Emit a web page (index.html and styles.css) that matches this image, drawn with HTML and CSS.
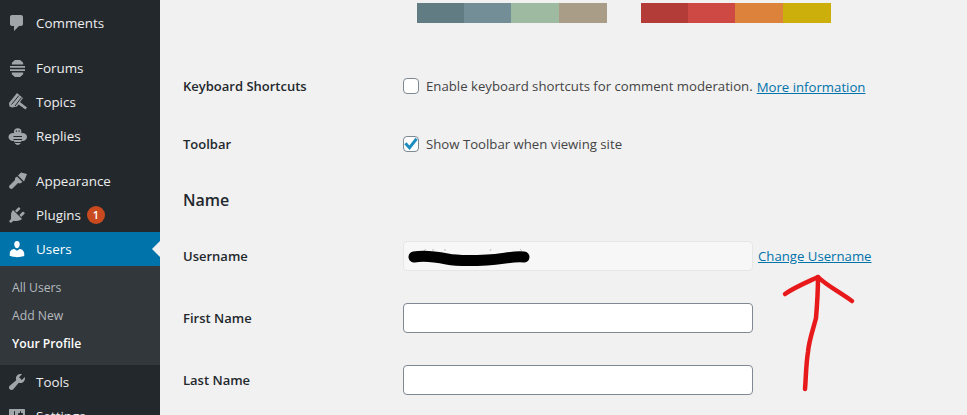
FILE: index.html
```html
<!DOCTYPE html>
<html lang="en-US">
<head>
  <meta charset="UTF-8" />
  <meta name="viewport" content="width=device-width, initial-scale=1" />
  <title>Profile</title>
  <link rel="stylesheet" href="styles.css">
</head>
<body>
  <div class="admin">
    <nav class="sidebar" aria-label="Main menu">
      <a class="menu-item" href="#">
        <svg class="menu-icon" viewBox="0 0 20 20"><path d="M5 2h9c1.100 0 2 .9 2 2v7c0 1.100-.9 2-2 2h-2l-5 5v-5H5c-1.100 0-2-.9-2-2V4c0-1.100.9-2 2-2z"/></svg>
        <span>Comments</span>
      </a>
      <div class="menu-sep"></div>
      <a class="menu-item" href="#">
        <svg class="menu-icon" viewBox="0 0 20 20"><path d="M8 2h5l3 2.500.3 2H4.700L5 4.500zM3 8h15v1.800H3zM3 11.300h15v1.800H3zM4.700 14.600h11.600l-.3 2L13 19H8l-3-2.400z"/></svg>
        <span>Forums</span>
      </a>
      <a class="menu-item" href="#">
        <svg class="menu-icon" viewBox="0 0 20 20">
          <path d="M2 11L10 1l6 5-3 4 7 5.500-1.500 2L11.500 12.500 10 14.500 5 15.500 2.500 14.500z"/>
          <path class="cut-line" d="M4.500 12.500L12 3.500M8 14L14.500 5.500"/>
        </svg>
        <span>Topics</span>
      </a>
      <a class="menu-item" href="#">
        <svg class="menu-icon" viewBox="0 0 20 20">
          <ellipse cx="6" cy="11" rx="4.500" ry="4"/>
          <ellipse cx="15.500" cy="11" rx="4.500" ry="4"/>
          <circle cx="10.700" cy="6" r="3.800"/>
          <ellipse cx="10.700" cy="13" rx="4" ry="6"/>
          <path class="cut" d="M6.500 10h8.500v.9H6.500zM6.500 13h8.500v.9H6.500zM7.500 16h6.500v.9H7.500zM8.800 4.500h1.200v1.200H8.800zM11.500 4.500h1.200v1.200h-1.200z"/>
        </svg>
        <span>Replies</span>
      </a>
      <div class="menu-sep"></div>
      <a class="menu-item" href="#">
        <svg class="menu-icon" viewBox="0 0 20 20"><path d="M11 4.500L14 1.500 20 3 17 10.500zM2 15L8 9V7L10 5.500 15.500 11 13 12.500 11 12 5 18C3 18 2 17 2 15z"/></svg>
        <span>Appearance</span>
      </a>
      <a class="menu-item" href="#">
        <svg class="menu-icon" viewBox="0 0 20 20"><path d="M13.110 4.360L9.870 7.600 8 5.730l3.240-3.240c.35-.34 1.050-.2 1.560.32.520.51.660 1.210.310 1.550zm-8 1.770l.91-1.120 9.010 9.010-1.190.84c-.71.710-2.630 1.160-3.820 1.160H6.140L4.900 17.260c-.59.590-1.540.590-2.120 0-.59-.58-.59-1.530 0-2.120l1.240-1.240v-3.880c0-1.130.4-3.190 1.090-3.890zm7.260 3.970l3.240-3.240c.34-.35 1.040-.21 1.550.31.520.51.660 1.210.310 1.550l-3.240 3.250z"/></svg>
        <span>Plugins</span>
        <span class="badge">1</span>
      </a>
      <a class="menu-item current" href="#">
        <svg class="menu-icon" viewBox="0 0 20 20"><path d="M10 9.250c-2.270 0-2.730-3.440-2.730-3.440C7 4.020 7.820 2 9.970 2c2.160 0 2.980 2.020 2.710 3.810 0 0-.41 3.440-2.680 3.440zm0 2.570L12.720 10c2.390 0 4.520 2.330 4.520 4.530v2.490s-3.650 1.130-7.240 1.130c-3.650 0-7.240-1.130-7.240-1.130v-2.490c0-2.250 1.940-4.480 4.470-4.480z"/></svg>
        <span>Users</span>
      </a>
      <ul class="submenu">
        <li><a href="#">All Users</a></li>
        <li><a href="#">Add New</a></li>
        <li><a class="active" href="#">Your Profile</a></li>
      </ul>
      <a class="menu-item" href="#">
        <svg class="menu-icon" viewBox="0 0 20 20"><path d="M16.680 9.770c-1.340 1.340-3.300 1.670-4.950.99l-5.410 6.520c-.99.990-2.590.990-3.580 0s-.99-2.590 0-3.570l6.520-5.420c-.68-1.650-.35-3.610.99-4.950 1.280-1.280 3.120-1.620 4.720-1.060l-2.890 2.890 2.820 2.820 2.860-2.870c.53 1.580.18 3.390-1.080 4.650z"/></svg>
        <span>Tools</span>
      </a>
      <a class="menu-item" href="#">
        <svg class="menu-icon" viewBox="0 0 20 20"><path fill-rule="evenodd" d="M18 16V4c0-.55-.45-1-1-1H3c-.55 0-1 .45-1 1v12c0 .55.45 1 1 1h14c.55 0 1-.45 1-1zM8 11h1c.55 0 1 .45 1 1s-.45 1-1 1H8v1.500c0 .28-.22.5-.5.5s-.5-.22-.5-.5V13H6c-.55 0-1-.45-1-1s.45-1 1-1h1V5.500c0-.28.22-.5.5-.5s.5.22.5.5V11zm5-2h-1c-.55 0-1-.45-1-1s.45-1 1-1h1V5.500c0-.28.22-.5.5-.5s.5.22.5.5V7h1c.55 0 1 .45 1 1s-.45 1-1 1h-1v5.500c0 .28-.22.5-.5.5s-.5-.22-.5-.5V9z"/></svg>
        <span>Settings</span>
      </a>
    </nav>

    <main class="content">
      <div class="schemes">
        <div class="scheme">
          <i class="swatch s-47 ocean-1"></i><i class="swatch s-47 ocean-2"></i><i class="swatch s-48 ocean-3"></i><i class="swatch s-48 ocean-4"></i>
        </div>
        <div class="scheme">
          <i class="swatch s-47 sun-1"></i><i class="swatch s-47 sun-2"></i><i class="swatch s-48 sun-3"></i><i class="swatch s-48 sun-4"></i>
        </div>
      </div>

      <div class="row row-check">
        <div class="row-label">Keyboard Shortcuts</div>
        <div class="row-field">
          <input type="checkbox" id="shortcuts" />
          <label for="shortcuts">Enable keyboard shortcuts for comment moderation.</label>
          <a class="link more" href="#">More information</a>
        </div>
      </div>

      <div class="row row-check">
        <div class="row-label">Toolbar</div>
        <div class="row-field">
          <input type="checkbox" id="toolbar" checked />
          <label for="toolbar">Show Toolbar when viewing site</label>
        </div>
      </div>

      <h2 class="section-title">Name</h2>

      <div class="row row-input">
        <label class="row-label" for="user_login">Username</label>
        <div class="row-field">
          <div class="masked">
            <input type="text" id="user_login" disabled />
            <!-- username scribbled out in the screenshot -->
            <svg class="scribble" viewBox="0 0 130 24" aria-hidden="true">
              <path class="scribble-ghost" d="M21 7l2-2M30 7V5M42 7V5M87 7l1-2M119 7l-2-2"/>
              <path class="scribble-ink" d="M11 13C22 11 34 13 44 15S66 17 84 16S108 12 121 13"/>
            </svg>
          </div>
          <a class="link change" href="#">Change Username</a>
        </div>
      </div>

      <div class="row row-input">
        <label class="row-label" for="first_name">First Name</label>
        <div class="row-field"><input type="text" id="first_name" /></div>
      </div>

      <div class="row row-input">
        <label class="row-label" for="last_name">Last Name</label>
        <div class="row-field"><input type="text" id="last_name" /></div>
      </div>

      <!-- red hand drawn arrow pointing at the link -->
      <svg class="arrow" viewBox="0 0 80 124" aria-hidden="true">
        <path d="M4 22C12 16 24 11 37 5C45 13 57 19 71 29"/>
        <path d="M37 5C37 20 36 34 35 46C32 58 28 68 27 80C25 92 25 105 24 117"/>
      </svg>
    </main>
  </div>
</body>
</html>
```

FILE: styles.css
```css
*, *::before, *::after { box-sizing: border-box; }
html, body { height: 100%; }
body {
  margin: 0;
  background: #f1f1f1;
  color: #444;
  font-family: "Open Sans", "Noto Sans", "Liberation Sans", sans-serif;
  font-size: 13.2px;
  overflow: hidden;
}
.admin {
  display: flex;
  height: 415px;
  overflow: hidden;
}

/* sidebar */
.sidebar {
  flex: 0 0 160px;
  height: 440px;
  padding-top: 6px;
  background: #23282d;
  font-size: 13.4px;
}
.menu-item {
  display: flex;
  align-items: center;
  gap: 9px;
  position: relative;
  height: 34px;
  padding-left: 7px;
  color: #eee;
  text-decoration: none;
}
.menu-icon {
  flex: 0 0 20px;
  width: 20px;
  height: 20px;
  fill: #a0a5aa;
}
.menu-icon .cut { fill: #23282d; }
.menu-icon .cut-line {
  fill: none;
  stroke: #23282d;
  stroke-width: 1;
}
.menu-sep { height: 11px; }
.menu-item.current {
  background: #0073aa;
  color: #fff;
}
.menu-item.current .menu-icon { fill: #fff; }
.menu-item.current::after {
  content: "";
  position: absolute;
  right: 0;
  top: 9px;
  border: 8px solid transparent;
  border-right-color: #f1f1f1;
  border-left-width: 0;
}
.badge {
  width: 18px;
  height: 18px;
  margin-left: -3px;
  border-radius: 50%;
  background: #ca4a1f;
  color: #fff;
  font-size: 11px;
  font-weight: 600;
  line-height: 18px;
  text-align: center;
}
.submenu {
  margin: 0;
  padding: 8px 0 7px;
  list-style: none;
  background: #32373c;
}
.submenu a {
  display: block;
  height: 28px;
  padding-left: 12px;
  color: #b4b9be;
  font-size: 12.2px;
  line-height: 28px;
  text-decoration: none;
}
.submenu a.active {
  color: #fff;
  font-weight: 600;
}

/* main form */
.content {
  flex: 1;
  position: relative;
  padding: 3px 0 0 23px;
}
.schemes {
  display: flex;
  gap: 34px;
  margin: 0 0 34px 234px;
}
.scheme { display: flex; }
.swatch {
  display: block;
  height: 20px;
}
.s-47 { width: 47px; }
.s-48 { width: 48px; }
.ocean-1 { background: #627c83; }
.ocean-2 { background: #738e96; }
.ocean-3 { background: #9ebaa0; }
.ocean-4 { background: #aa9d88; }
.sun-1 { background: #b43c38; }
.sun-2 { background: #cf4944; }
.sun-3 { background: #dd823b; }
.sun-4 { background: #ccaf0b; }

.row {
  display: flex;
  align-items: center;
}
.row-check { height: 58px; }
.row-input { height: 62px; }
.row-label {
  flex: 0 0 220px;
  color: #23282d;
  font-size: 13px;
  font-weight: 600;
}
.row-field {
  display: flex;
  align-items: center;
}
.section-title {
  height: 52px;
  margin: 0;
  color: #23282d;
  font-size: 16px;
  font-weight: 600;
  line-height: 54px;
}

input[type="checkbox"] {
  appearance: none;
  display: grid;
  place-items: center;
  width: 16px;
  height: 16px;
  margin: 0 7px 0 0;
  border: 1px solid #7e8993;
  border-radius: 4px;
  background: #fff;
}
input[type="checkbox"]:checked::before {
  content: "";
  width: 14px;
  height: 14px;
  background: #1e8cbe;
  clip-path: polygon(2% 52%, 18% 38%, 38% 60%, 82% 6%, 98% 20%, 40% 92%);
}
input[type="text"] {
  display: block;
  width: 350px;
  height: 30px;
  border: 1px solid #7e8993;
  border-radius: 4px;
  background: #fff;
}
input[type="text"]:disabled {
  border-color: #e6e6e6;
  background: #f7f7f7;
}
.link { color: #0073aa; }
.more { margin: 1px 0 0 4px; }
.change { margin-left: 5px; }

.masked { position: relative; }
.scribble {
  position: absolute;
  left: 0;
  top: 3px;
  width: 130px;
  height: 24px;
}
.scribble-ink {
  fill: none;
  stroke: #000;
  stroke-width: 11;
  stroke-linecap: round;
}
.scribble-ghost {
  fill: none;
  stroke: #bbb;
  stroke-width: 1;
}
.arrow {
  position: absolute;
  left: 621px;
  top: 272px;
  width: 80px;
  height: 124px;
}
.arrow path {
  fill: none;
  stroke: #e8191b;
  stroke-width: 4.500;
  stroke-linecap: round;
  stroke-linejoin: round;
}
```
